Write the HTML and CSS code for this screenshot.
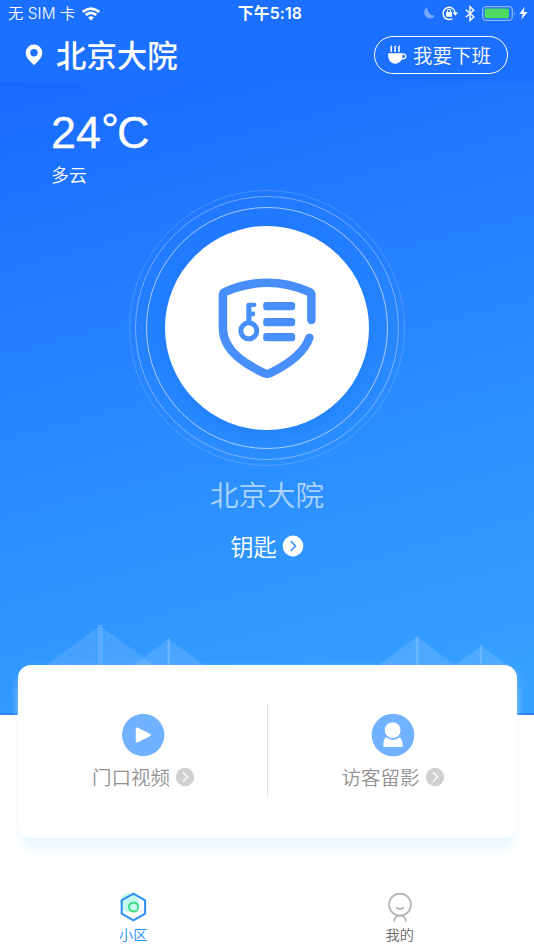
FILE: index.html
```html
<!DOCTYPE html>
<html lang="zh-CN">
<head>
<meta charset="utf-8">
<title>北京大院</title>
<link rel="stylesheet" href="styles.css">
</head>
<body>
<main class="hero">
  <div class="top">
    <div class="status">
      <div class="carrier"><span>无 SIM 卡</span>
        <svg class="wifi" width="18" height="14" viewBox="0 0 18 14" fill="none" stroke="#fff" stroke-width="2.6"><path d="M.8 4.9Q9-1.8 17.2 4.9M3.7 8.1Q9 3.5 14.3 8.1"/><path d="M6.1 10.4Q9 8 11.9 10.4L9 13.4Z" fill="#fff" stroke="none"/></svg>
      </div>
      <div class="time">下午5:18</div>
      <div class="indicators">
        <svg width="102" height="18" viewBox="0 0 102 18" fill="none">
          <path d="M3.8 3.3A6 6 0 1 0 12.3 11.3Q5.5 12.5 3.8 3.3Z" fill="#76abff"/>
          <path d="M29.5 14.5A6.1 6.1 0 1 1 32.2 9" stroke="#fff" stroke-width="1.4"/><path d="M29.6 8.6h5.4l-2.7 3.2Z" fill="#fff"/>
          <rect x="23.1" y="8.1" width="6" height="4.6" rx=".6" fill="#fff"/><path d="M24.5 8.4V7a1.6 1.6 0 0 1 3.2 0v1.4" stroke="#fff" stroke-width="1.1"/>
          <path d="M42.8 5.8l8 7-3.8 3.7V2.6l3.8 3.7-8 7" stroke="#fff" stroke-width="1.4"/>
          <rect x="59.7" y="2.7" width="29.6" height="13.6" rx="3.5" stroke="#8bb8ff" stroke-width="1.3"/><rect x="61.7" y="4.6" width="24.3" height="9.7" rx="1.2" fill="#4cd964"/><path d="M91 7.2q2 2.2 0 4.5Z" fill="#8bb8ff"/>
          <path d="M101.8 2.6L96.4 9.9h3.4L98.2 15.8l6.4-7.9h-3.9Z" fill="#fff"/>
        </svg>
      </div>
    </div>
    <header class="header">
      <svg class="pin" width="18" height="22" viewBox="0 0 18 22"><path fill="#fff" fill-rule="evenodd" d="M9 .5A8.3 8.3 0 0 0 .7 8.8C.7 14.5 6.5 18.5 9 21.2 11.5 18.5 17.3 14.5 17.3 8.8A8.3 8.3 0 0 0 9 .5ZM9 5.1a3.7 3.7 0 1 1 0 7.4 3.7 3.7 0 0 1 0-7.4Z"/></svg>
      <h1 class="title">北京大院</h1>
      <button class="off-work">
        <svg width="20" height="20" viewBox="0 0 20 20" fill="none" stroke="#fff"><path d="M1.2 8.2h14.3v2.6c0 4.5-3.2 7.9-7.2 7.9s-7.1-3.4-7.1-7.9Z" fill="#fff" stroke="none"/><path d="M15 9.4c2-.9 3.8 0 3.8 1.9s-1.9 3-4.5 2.2" stroke-width="1.4"/><path d="M4.9.8c-2.6 2.3.9 3.6-1.1 6.1M8.8.8C6.2 3.1 9.7 4.4 7.7 6.9M12.7.8c-2.6 2.3.9 3.6-1.1 6.1" stroke-width="1.5"/></svg>
        <span>我要下班</span>
      </button>
    </header>
  </div>
  <section class="weather">
    <div class="temperature">24<span class="degree">°</span>C</div>
    <div class="condition">多云</div>
  </section>
  <div class="ring ring-outer"><div class="ring ring-middle"><div class="ring ring-inner"><div class="disc">
    <svg width="100" height="102" viewBox="0 0 100 102" fill="none" stroke="#488ffb">
      <path d="M94.4 43V18C94.4 16.4 93.7 15.5 92.2 14.8Q50.5-3.4 8.1 14.8Q5.9 15.8 5.9 18V51C5.9 75.5 32 88.5 46.8 96Q50.2 97.6 53.5 96C72 87 87 76.5 92.4 60.7" stroke-width="8.5" stroke-linecap="round"/>
      <g fill="#488ffb" stroke="none"><rect x="46.2" y="25" width="32" height="8.3" rx="3"/><rect x="46.2" y="41" width="32" height="8.3" rx="3"/><rect x="46.2" y="56" width="32" height="8.3" rx="3"/><path d="M29.3 46V28.2q0-2.4 2.4-2.4h5.7q2 0 2 2.1t-2 2.1h-3v4.6h2.1q1.7 0 1.7 2.3t-1.7 2.3h-2.1V46Z"/></g>
      <circle cx="31.8" cy="53.8" r="8" stroke-width="5"/>
    </svg>
  </div></div></div></div>
  <h2 class="community">北京大院</h2>
  <a class="keys"><span>钥匙</span><svg width="22" height="22" viewBox="0 0 22 22" fill="none"><circle cx="11" cy="11" r="10.4" fill="#fff"/><path d="M8.7 6.1l4.7 4.9-4.7 4.9" stroke="#2b92ff" stroke-width="1.5"/></svg></a>
  <svg class="bridges" width="534" height="42" viewBox="0 0 534 42">
    <defs>
      <pattern id="rays-l" width="4" height="2.7" patternUnits="userSpaceOnUse" patternTransform="skewY(-36)"><path d="M0 .7h4" stroke="#fff" stroke-width="1.2"/></pattern>
      <pattern id="rays-r" width="4" height="2.7" patternUnits="userSpaceOnUse" patternTransform="skewY(36)"><path d="M0 .7h4" stroke="#fff" stroke-width="1.2"/></pattern>
    </defs>
    <g opacity=".25"><path d="M99 2L46 41h53Z" fill="url(#rays-l)"/><path d="M101 2l53 39h-53Z" fill="url(#rays-r)"/></g>
    <g fill="#fff" opacity=".12"><path d="M168.5 15L134 41h70Z"/><path d="M417 13l-38 28h76Z"/><path d="M481 22l-26 19h52Z"/></g>
    <g fill="#fff" opacity=".17"><path d="M98.3 1h4v40h-4zM167.3 14h2.8v27h-2.8zM415.8 12h2.7v29h-2.7zM479.9 21h2v20h-2z"/></g>
  </svg>
</main>
<section class="card">
  <a class="entry">
    <svg width="44" height="44" viewBox="0 0 44 44"><circle cx="21.2" cy="22" r="21.2" fill="#70b2ff"/><path d="M15 15.7v12.6L27.7 22Z" fill="#fff" stroke="#fff" stroke-width="2.5" stroke-linejoin="round"/></svg>
    <span class="entry-label">门口视频<svg width="20" height="20" viewBox="0 0 20 20" fill="none"><circle cx="10" cy="10" r="9.2" fill="#d0d0d0"/><path d="M8 5.2l4.6 4.8L8 14.8" stroke="#fff" stroke-width="1.4"/></svg></span>
  </a>
  <a class="entry">
    <svg width="44" height="44" viewBox="0 0 44 44"><circle cx="22" cy="22" r="21.3" fill="#70b2ff"/><path d="M14.8 24.2Q22 29.6 28.8 24.2C31.1 26.3 31.8 30 31.6 34H12.4C12.2 30 12.6 26.3 14.8 24.2Z" fill="#fff"/><circle cx="21.7" cy="17.2" r="8.4" fill="#fff" stroke="#70b2ff" stroke-width="1"/></svg>
    <span class="entry-label">访客留影<svg width="20" height="20" viewBox="0 0 20 20" fill="none"><circle cx="10" cy="10" r="9.2" fill="#d0d0d0"/><path d="M8 5.2l4.6 4.8L8 14.8" stroke="#fff" stroke-width="1.4"/></svg></span>
  </a>
</section>
<nav class="tabs">
  <a class="tab active">
    <svg width="30" height="30" viewBox="0 0 30 30" fill="none"><circle cx="11.4" cy="10.8" r="9.5" fill="#c5faec"/><path d="M15.4 1.7l11.7 6.6v13.4L15.4 28.3 3.7 21.7V8.3Z" stroke="#2d8eff" stroke-width="2" stroke-linejoin="round"/><circle cx="15.6" cy="15" r="4.6" stroke="#3dd985" stroke-width="2"/></svg>
    <span>小区</span>
  </a>
  <a class="tab">
    <svg width="30" height="30" viewBox="0 0 30 30" fill="none" stroke="#b5b5b5" stroke-width="1.7"><circle cx="15" cy="12.6" r="11"/><path d="M11.2 15.5Q15 18.5 18.8 15.5M9.2 29.5C9.4 25 11.3 23.6 15 23.6S20.6 25 20.8 29.5"/></svg>
    <span>我的</span>
  </a>
</nav>
</body>
</html>
```
FILE: styles.css
```css
* { box-sizing: border-box; }
body {
  margin: 0;
  height: 950px;
  overflow: hidden;
  background: #fff;
  font-family: "Noto Sans CJK SC", sans-serif;
}
svg { display: block; flex: none; }
.hero {
  height: 715px;
  display: flex;
  flex-direction: column;
  align-items: center;
  color: #fff;
  background: linear-gradient(165deg, #1869ff 8%, #2c90ff 65%, #35a1ff 96%);
  border-bottom: 2px solid #2a82f6;
}
.top { width: 100%; height: 82px; background: #1b70ff; }
.status {
  height: 28px;
  display: grid;
  grid-template-columns: 1fr 80px 1fr;
  align-items: center;
  padding: 0 6px 0 8px;
  font: 15.3px/28px Inter, "Noto Sans CJK SC", sans-serif;
}
.carrier { display: flex; align-items: center; gap: 7px; white-space: nowrap; font-weight: 350; letter-spacing: .1px; }
.time { text-align: center; font-size: 15.8px; font-weight: 600; white-space: nowrap; letter-spacing: .15px; padding-left: 4px; }
.indicators { display: flex; justify-content: flex-end; margin: -2px 3px 0 0; }
.indicators svg { overflow: visible; }
.wifi { margin-top: -1px; }
.header { display: flex; align-items: center; height: 54px; padding: 0 26px 0 25px; }
.title { margin: -2px auto 0 13px; font-size: 30.4px; line-height: 44px; font-weight: 500; }
.off-work {
  width: 134px;
  height: 38px;
  display: flex;
  align-items: center;
  gap: 6px;
  padding: 0 0 1px 12px;
  border: 1.5px solid #fff;
  border-radius: 19px;
  background: none;
  color: #fff;
  font: 350 19.5px/28px "Noto Sans CJK SC", sans-serif;
}
.weather { align-self: flex-start; padding: 24px 0 0 51px; height: 108px; }
.temperature { font: 45px/54px "Liberation Sans", sans-serif; height: 54px; white-space: nowrap; -webkit-text-stroke: .3px #fff; }
.degree { position: relative; top: -3px; letter-spacing: -2px; }
.condition { font-size: 17.9px; font-weight: 350; line-height: 28px; }
.ring { display: flex; align-items: center; justify-content: center; flex: none; border-radius: 50%; }
.ring-outer { width: 276px; height: 276px; border: 1px solid rgba(255,255,255,.17); }
.ring-middle { width: 264px; height: 264px; border: 1px solid rgba(255,255,255,.36); }
.ring-inner { width: 242px; height: 242px; border: 1px solid rgba(255,255,255,.6); }
.disc {
  width: 204px;
  height: 204px;
  display: flex;
  align-items: center;
  justify-content: center;
  border-radius: 50%;
  background: #fff;
  box-shadow: 0 5px 20px rgba(17,108,244,.35);
}
.community { margin: 7px 0 0; font-size: 28.5px; font-weight: 350; line-height: 42px; color: #abd5ff; }
.keys { display: flex; align-items: center; gap: 5px; height: 34px; margin-top: 14px; font-size: 23.3px; font-weight: 350; line-height: 34px; }
.keys span { margin-top: -1px; }
.bridges { margin-top: 61px; }
.card {
  position: relative;
  display: grid;
  grid-template-columns: 1fr 1fr;
  width: 499px;
  height: 173px;
  margin: -50px 0 0 18px;
  padding: 48px 0 0 1px;
  border-radius: 13px;
  background: #fff;
  box-shadow: 0 16px 9px -4px #eef8ff, 0 4px 8px rgba(220,241,255,.35);
}
.entry { display: flex; flex-direction: column; align-items: center; height: 83px; }
.entry + .entry { position: relative; }
.entry + .entry::before {
  content: "";
  position: absolute;
  left: -1px;
  top: -8px;
  width: 1px;
  height: 91px;
  background: #e2e2e2;
}
.entry-label { display: flex; align-items: center; gap: 5px; margin-top: 6px; font-size: 19.5px; font-weight: 350; line-height: 28px; color: #929292; }
.entry + .entry .entry-label { padding-left: 1px; }
.tabs { display: grid; grid-template-columns: 1fr 1fr; padding: 54px 1px 0 0; }
.tab { display: flex; flex-direction: column; align-items: center; font-size: 14.2px; font-weight: 350; line-height: 22px; color: #666; gap: 1px; }
.active { color: #258cff; }
```
